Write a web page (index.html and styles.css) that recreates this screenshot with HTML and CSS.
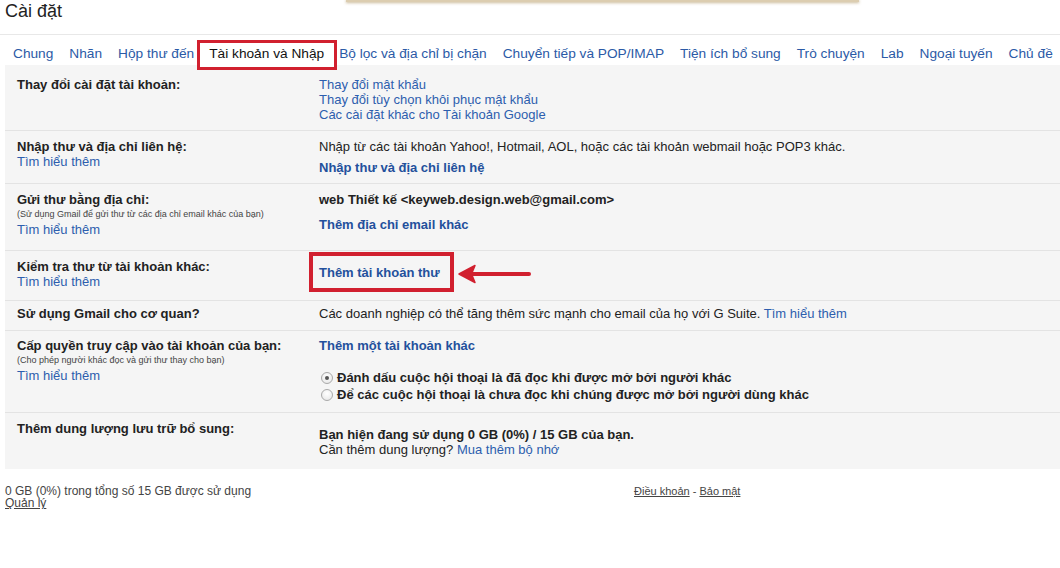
FILE: index.html
```html
<!DOCTYPE html>
<html lang="vi">
<head>
<meta charset="utf-8">
<title>Cài đặt</title>
<link rel="stylesheet" href="styles.css">
</head>
<body>
<div class="notice"></div>
<header class="title">Cài đặt</header>
<nav class="tabs">
  <a class="tab">Chung</a>
  <a class="tab">Nhãn</a>
  <a class="tab">Hộp thư đến</a>
  <a class="tab active">Tài khoản và Nhập</a>
  <a class="tab">Bộ lọc và địa chỉ bị chặn</a>
  <a class="tab">Chuyển tiếp và POP/IMAP</a>
  <a class="tab">Tiện ích bổ sung</a>
  <a class="tab">Trò chuyện</a>
  <a class="tab">Lab</a>
  <a class="tab">Ngoại tuyến</a>
  <a class="tab">Chủ đề</a>
</nav>
<main class="panel">
  <section class="row row-first">
    <div class="label"><b>Thay đổi cài đặt tài khoản:</b></div>
    <div class="value">
      <a class="link">Thay đổi mật khẩu</a><br>
      <a class="link">Thay đổi tùy chọn khôi phục mật khẩu</a><br>
      <a class="link">Các cài đặt khác cho Tài khoản Google</a>
    </div>
  </section>
  <section class="row row-import">
    <div class="label"><b>Nhập thư và địa chỉ liên hệ:</b><br><a class="link">Tìm hiểu thêm</a></div>
    <div class="value">
      <div>Nhập từ các tài khoản Yahoo!, Hotmail, AOL, hoặc các tài khoản webmail hoặc POP3 khác.</div>
      <div class="action"><a class="link strong">Nhập thư và địa chỉ liên hệ</a></div>
    </div>
  </section>
  <section class="row row-send">
    <div class="label"><b>Gửi thư bằng địa chỉ:</b>
      <div class="small">(Sử dụng Gmail để gửi thư từ các địa chỉ email khác của bạn)</div>
      <a class="link">Tìm hiểu thêm</a></div>
    <div class="value">
      <div><b>web Thiết kế &lt;keyweb.design.web@gmail.com&gt;</b></div>
      <div class="action action-wide"><a class="link strong">Thêm địa chỉ email khác</a></div>
    </div>
  </section>
  <section class="row row-check">
    <div class="label"><b>Kiểm tra thư từ tài khoản khác:</b><br><a class="link">Tìm hiểu thêm</a></div>
    <div class="value">
      <span class="annot"><a class="link strong">Thêm tài khoản thư</a></span><svg class="arrow" width="74" height="20" viewBox="0 0 74 20" aria-hidden="true"><path d="M1 10 L17 1.5 L13.5 10 L17 18.5 Z" fill="#d1202f" stroke="#d1202f" stroke-width="1.5" stroke-linejoin="round"/><line x1="13" y1="10" x2="71" y2="10" stroke="#d1202f" stroke-width="4" stroke-linecap="round"/></svg>
    </div>
  </section>
  <section class="row row-work">
    <div class="label"><b>Sử dụng Gmail cho cơ quan?</b></div>
    <div class="value">Các doanh nghiệp có thể tăng thêm sức mạnh cho email của họ với G Suite. <a class="link">Tìm hiểu thêm</a></div>
  </section>
  <section class="row row-grant">
    <div class="label"><b>Cấp quyền truy cập vào tài khoản của bạn:</b>
      <div class="small">(Cho phép người khác đọc và gửi thư thay cho bạn)</div>
      <a class="link">Tìm hiểu thêm</a></div>
    <div class="value">
      <a class="link strong">Thêm một tài khoản khác</a>
      <div class="radios">
        <label class="radio"><span class="dot checked"></span><b>Đánh dấu cuộc hội thoại là đã đọc khi được mở bởi người khác</b></label>
        <label class="radio"><span class="dot"></span><b>Để các cuộc hội thoại là chưa đọc khi chúng được mở bởi người dùng khác</b></label>
      </div>
    </div>
  </section>
  <section class="row row-last">
    <div class="label"><b>Thêm dung lượng lưu trữ bổ sung:</b></div>
    <div class="value storage">
      <b>Bạn hiện đang sử dụng 0 GB (0%) / 15 GB của bạn.</b><br>
      Cần thêm dung lượng? <a class="link">Mua thêm bộ nhớ</a>
    </div>
  </section>
</main>
<footer class="footer">
  <div class="usage">0 GB (0%) trong tổng số 15 GB được sử dụng<br><a class="flink">Quản lý</a></div>
  <div class="legal"><a class="flink">Điều khoản</a> - <a class="flink">Bảo mật</a></div>
</footer>
</body>
</html>
```

FILE: styles.css
```css
html, body {
  margin: 0;
  padding: 0;
  background: #ffffff;
}

body {
  font-family: "Liberation Sans", Arial, sans-serif;
  font-size: 13px;
  line-height: 15px;
  color: #222222;
  position: relative;
  width: 1060px;
  overflow: hidden;
}

.notice {
  position: absolute;
  left: 346px;
  top: -1px;
  width: 513px;
  height: 3px;
  background: #dccdb0;
  box-shadow: 0 1px 3px rgba(160, 130, 70, 0.55);
}

.title {
  height: 34px;
  padding-left: 5px;
  font-size: 18px;
  line-height: 22px;
  color: #222222;
  border-bottom: 1px solid #e8e8e8;
}

.tabs {
  display: flex;
  padding-left: 5px;
  height: 30px;
  white-space: nowrap;
}

.tab {
  font-size: 13.7px;
  line-height: 16px;
  padding: 11px 8px 3px;
  color: #2b5aa6;
}

.tab.active {
  position: relative;
  z-index: 1;
  color: #111111;
  background: #ffffff;
  border: 3px solid #d1202f;
  padding: 3px 10px 5px 9px;
  margin: 5px -6px -5px -5px;
  height: 16px;
}

.panel {
  margin-left: 5px;
  background: #f5f5f5;
}

.row {
  display: grid;
  grid-template-columns: 302px 1fr;
  padding: 8px 0 10px 12px;
  border-bottom: 1px solid #e3e3e3;
}

.row-first {
  padding-top: 12px;
  padding-bottom: 8px;
}

.row-import {
  padding-bottom: 8px;
}

.row-send {
  padding-bottom: 13px;
}

.row-check {
  padding-bottom: 10px;
}

.row-work {
  padding-top: 5px;
  padding-bottom: 9px;
}

.row-grant {
  padding-top: 7px;
  padding-bottom: 9px;
}

.row-last {
  border-bottom: none;
  padding-bottom: 12px;
}

.label b {
  color: #222222;
}

.small {
  font-size: 9px;
  line-height: 15px;
  color: #444444;
}

.link {
  color: #2d5eae;
  cursor: pointer;
}

.link.strong {
  font-weight: bold;
  color: #23509c;
}

.action {
  margin-top: 6px;
}

.action-wide {
  margin-top: 10px;
}

.annot {
  display: inline-block;
  vertical-align: top;
  border: 4px solid #d1202f;
  padding: 9px 10px 8px 6px;
  margin: -7px 0 -2px -10px;
}

.arrow {
  display: inline-block;
  vertical-align: top;
  margin: 5px 0 0 4px;
}

.radios {
  margin-top: 16px;
}

.radio {
  display: flex;
  align-items: center;
  height: 17px;
}

.radio b {
  font-weight: bold;
  color: #222222;
}

.dot {
  box-sizing: border-box;
  width: 12px;
  height: 12px;
  margin: 0 4px 0 2px;
  border-radius: 50%;
  border: 1px solid #a9a9a9;
  background: radial-gradient(circle at 50% 35%, #ffffff 0%, #e4e4e4 100%);
  display: flex;
  align-items: center;
  justify-content: center;
}

.dot.checked::after {
  content: "";
  width: 4px;
  height: 4px;
  border-radius: 50%;
  background: #555555;
}

.storage {
  margin-top: 6px;
}

.footer {
  display: grid;
  grid-template-columns: 629px 1fr;
  padding-left: 5px;
  margin-top: 16px;
  line-height: 12px;
  color: #444444;
}

.usage {
  font-size: 12px;
}

.legal {
  font-size: 11px;
}

.flink {
  color: #444444;
  text-decoration: underline;
}
```
